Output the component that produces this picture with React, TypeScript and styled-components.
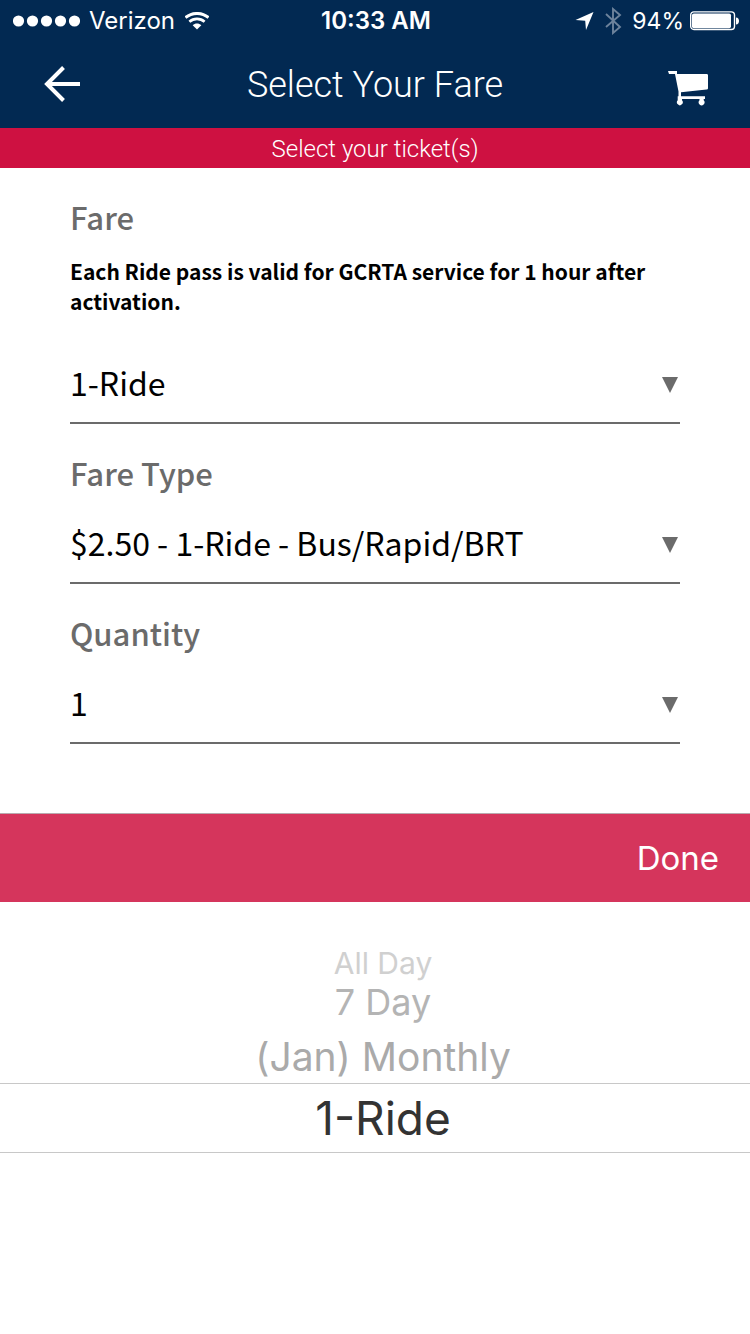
import React, { useState } from "react";
import styled, { createGlobalStyle } from "styled-components";

const GlobalStyle = createGlobalStyle`
  *, *::before, *::after { box-sizing: border-box; }
  body { margin: 0; background: #fff; font-family: Inter, "Liberation Sans", sans-serif; }
  button, select, input { font: inherit; color: inherit; }
`;

const Page = styled.div`
  display: flex;
  flex-direction: column;
  min-height: 100vh;
  background: #fff;
`;

const StatusBar = styled.div`
  display: grid;
  grid-template-columns: 1fr auto 1fr;
  align-items: center;
  height: 40px;
  padding: 2px 11px 0 13px;
  background: #022952;
  color: #fff;
  font-size: 24px;
  line-height: 38px;
`;

const StatusGroup = styled.div<{ $end?: boolean }>`
  display: flex;
  align-items: center;
  justify-content: ${(p) => (p.$end ? "flex-end" : "flex-start")};
  gap: ${(p) => (p.$end ? 6 : 9)}px;
`;

const Carrier = styled.span`
  margin-right: 1px;
`;

const Clock = styled.time`
  font-weight: 600;
`;

const Charge = styled.span`
  margin-left: 4px;
  font-size: 23px;
`;

const NavBar = styled.header`
  display: grid;
  grid-template-columns: 84px 1fr 84px;
  align-items: center;
  height: 88px;
  background: #022952;
  color: #fff;
`;

const Title = styled.h1`
  margin: 0;
  padding-top: 2px;
  text-align: center;
  font-family: Roboto, sans-serif;
  font-size: 36px;
  font-weight: 300;
  line-height: 86px;
`;

const IconButton = styled.button`
  display: flex;
  justify-content: flex-end;
  align-items: center;
  width: 84px;
  height: 88px;
  padding: 0 4px;
  border: 0;
  background: none;
  cursor: pointer;
`;

const CartButton = styled(IconButton)`
  justify-content: flex-start;
  padding: 10px 0 0 2px;
`;

const Banner = styled.p`
  margin: 0;
  padding-top: 2px;
  background: #ce1141;
  color: #fff;
  text-align: center;
  font-family: Roboto, sans-serif;
  font-size: 24px;
  font-weight: 300;
  line-height: 38px;
`;

const Form = styled.form`
  padding: 0 70px 69px;
  font-family: "Noto Sans CJK SC", "Noto Sans", sans-serif;
`;

const Field = styled.div`
  display: flex;
  flex-direction: column;
  gap: 11px;
  padding-top: 29px;
`;

const FieldLabel = styled.label`
  color: #6b6b6b;
  font-size: 31px;
  font-weight: 500;
  line-height: 40px;
`;

const Note = styled.p`
  margin: 8px 0 17px;
  color: #000;
  font-size: 21px;
  font-weight: 700;
  line-height: 30px;
`;

const SelectBox = styled.div`
  display: grid;
  align-items: center;
  height: 80px;
  border-bottom: 2px solid #6b6b6b;
  > * { grid-area: 1 / 1; }
`;

const Select = styled.select`
  appearance: none;
  width: 100%;
  height: 78px;
  padding: 0 30px 2px 0;
  border: 0;
  border-radius: 0;
  outline: 0;
  background: transparent;
  color: #000;
  font-size: 32px;
`;

const Arrow = styled.svg`
  justify-self: end;
  margin: 4px 2px 0 0;
  pointer-events: none;
`;

const Toolbar = styled.div`
  display: flex;
  justify-content: flex-end;
  height: 89px;
  border-top: 1px solid #b9a9ae;
  background: #d5355c;
`;

const DoneButton = styled.button`
  padding: 0 31px;
  border: 0;
  background: none;
  color: #fff;
  font-size: 33px;
  cursor: pointer;
`;

const Wheel = styled.fieldset`
  display: flex;
  flex-direction: column;
  min-width: 0;
  margin: 0;
  padding: 49px 0 0;
  border: 0;
`;

const wheelSteps = [
  { height: 70, size: 46, color: "#333" },
  { height: 54, size: 39, color: "#aaa" },
  { height: 54, size: 36, color: "#b4b4b4" },
  { height: 24, size: 30, color: "#d0d0d0" },
];

const WheelOption = styled.label<{ $step: number }>`
  display: flex;
  align-items: center;
  justify-content: center;
  height: ${(p) => wheelSteps[p.$step].height}px;
  padding-left: 16px;
  border: solid #c8c8c8;
  border-width: ${(p) => (p.$step === 0 ? "1px 0" : "0")};
  color: ${(p) => wheelSteps[p.$step].color};
  font-size: ${(p) => wheelSteps[p.$step].size}px;
  line-height: 1;
  cursor: pointer;
`;

const HiddenRadio = styled.input`
  appearance: none;
  width: 0;
  height: 0;
  margin: 0;
`;

const fares = ["All Day", "7 Day", "(Jan) Monthly", "1-Ride"];

const SignalDots = () => (
  <svg width="67" height="12" viewBox="0 0 67 12" fill="#fff" aria-hidden="true">
    {[5.5, 19.5, 33.5, 47.5, 61.5].map((x) => (
      <circle key={x} cx={x} cy="6" r="5.6" />
    ))}
  </svg>
);

const WifiIcon = () => (
  <svg width="24" height="18" viewBox="1 2 24 17.5" fill="none" aria-hidden="true">
    <path d="M1.5 7.3C8 1.8 18 1.8 24.5 7.3" stroke="#fff" strokeWidth="2.9" />
    <path d="M5.4 11.5c4.3-3.8 10.9-3.8 15.2 0" stroke="#fff" strokeWidth="2.7" />
    <path d="M13 19.2l-4.3-4.2c2.4-2.2 6.2-2.2 8.6 0z" fill="#fff" />
  </svg>
);

const LocationIcon = () => (
  <svg width="23" height="18" viewBox="0 0 23 18" fill="#fff" aria-hidden="true">
    <path d="M18.5 0L11 18l-.8-9.2L.5 8z" />
  </svg>
);

const BluetoothIcon = () => (
  <svg width="18" height="28" viewBox="5 0 18 28" fill="none" stroke="#6d839c" strokeWidth="1.9" aria-hidden="true">
    <path d="M7 7l14 13-7 6V2l7 6L7 20" />
  </svg>
);

const BatteryIcon = () => (
  <svg width="49" height="20" viewBox="0 0 49 20" aria-hidden="true">
    <rect x=".7" y=".9" width="43.8" height="17.6" rx="3.2" fill="none" stroke="#fff" strokeWidth="1.4" />
    <rect x="2" y="2.4" width="39" height="14.8" rx="1.8" fill="#fff" />
    <path d="M46 6.5c4 0 4 7 0 7z" fill="#fff" />
  </svg>
);

const BackIcon = () => (
  <svg width="36" height="36" viewBox="0 0 36 36" fill="none" stroke="#fff" strokeWidth="4" aria-hidden="true">
    <path d="M19.5 1.5L3 18l16.5 16.5M3 18h33" />
  </svg>
);

const CartIcon = () => (
  <svg width="41" height="36" viewBox="0 0 41 36" fill="#fff" aria-hidden="true">
    <path d="M0 0h9v3h29.5c1 0 1.5.5 1.5 1.5V17c0 1-.4 1.4-1.4 1.6L13 21.2V25.3h24v2.7h-1.3v1.2a2.9 3 0 1 1-4.2 0V28H14v1.2a2.9 3 0 1 1-4.3 0V25.3h.8V20.5L7 3H1z" />
  </svg>
);

type SelectFieldProps = {
  id: string;
  label: string;
  note?: string;
  options: string[];
  value: string;
  onChange: (value: string) => void;
};

const SelectField = ({ id, label, note, options, value, onChange }: SelectFieldProps) => (
  <Field>
    <FieldLabel htmlFor={id}>{label}</FieldLabel>
    {note && <Note>{note}</Note>}
    <SelectBox>
      <Select id={id} value={value} onChange={(e) => onChange(e.target.value)}>
        {options.map((o) => (
          <option key={o}>{o}</option>
        ))}
      </Select>
      <Arrow width="16" height="16" viewBox="0 0 16 16" fill="#6b6b6b" aria-hidden="true">
        <path d="M0 0h16L8 16z" />
      </Arrow>
    </SelectBox>
  </Field>
);

export default function App() {
  const [fare, setFare] = useState("1-Ride");
  const [fareType, setFareType] = useState("$2.50 - 1-Ride - Bus/Rapid/BRT");
  const [quantity, setQuantity] = useState("1");
  const selected = fares.indexOf(fare);

  return (
    <Page>
      <GlobalStyle />
      <StatusBar>
        <StatusGroup>
          <SignalDots />
          <Carrier>Verizon</Carrier>
          <WifiIcon />
        </StatusGroup>
        <Clock>10:33 AM</Clock>
        <StatusGroup $end>
          <LocationIcon />
          <BluetoothIcon />
          <Charge>94%</Charge>
          <BatteryIcon />
        </StatusGroup>
      </StatusBar>
      <NavBar>
        <IconButton type="button" aria-label="Back">
          <BackIcon />
        </IconButton>
        <Title>Select Your Fare</Title>
        <CartButton type="button" aria-label="Cart">
          <CartIcon />
        </CartButton>
      </NavBar>
      <Banner>Select your ticket(s)</Banner>
      <Form>
        <SelectField
          id="fare"
          label="Fare"
          note="Each Ride pass is valid for GCRTA service for 1 hour after activation."
          options={fares}
          value={fare}
          onChange={setFare}
        />
        <SelectField
          id="fare-type"
          label="Fare Type"
          options={["$2.50 - 1-Ride - Bus/Rapid/BRT"]}
          value={fareType}
          onChange={setFareType}
        />
        <SelectField
          id="quantity"
          label="Quantity"
          options={["1", "2", "3", "4"]}
          value={quantity}
          onChange={setQuantity}
        />
      </Form>
      <Toolbar>
        <DoneButton type="button">Done</DoneButton>
      </Toolbar>
      <Wheel aria-label="Fare">
        {fares.map((name, i) => (
          <WheelOption key={name} $step={Math.abs(selected - i)}>
            <HiddenRadio type="radio" name="fare-wheel" checked={name === fare} onChange={() => setFare(name)} />
            {name}
          </WheelOption>
        ))}
      </Wheel>
    </Page>
  );
}
